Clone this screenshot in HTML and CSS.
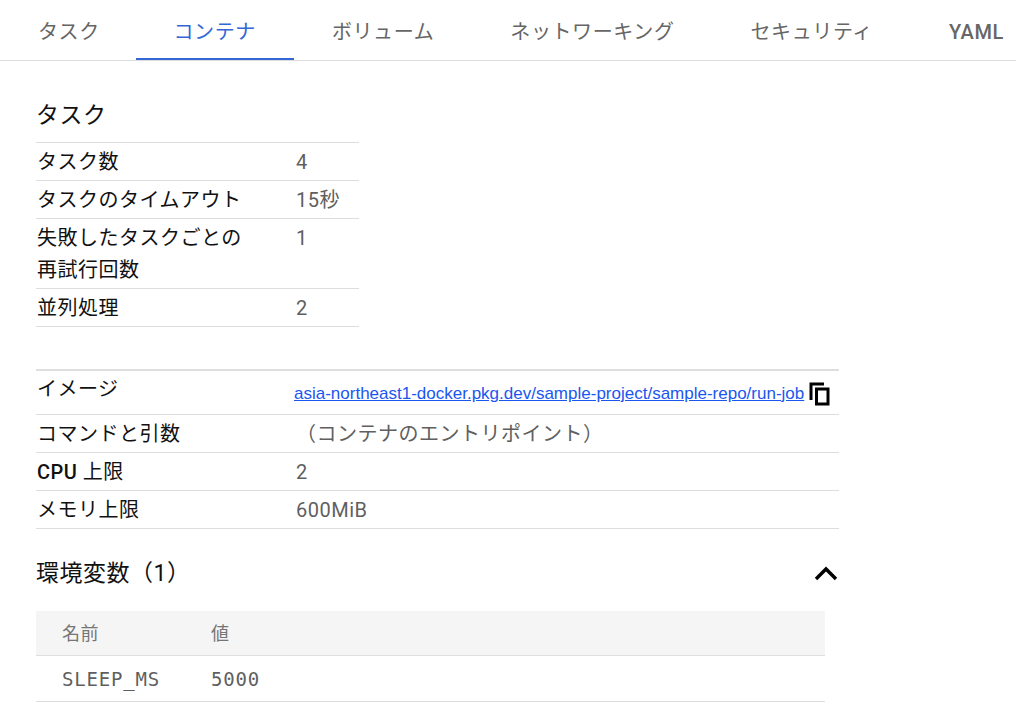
FILE: index.html
```html
<!DOCTYPE html>
<html lang="ja">

<head>
    <meta charset="UTF-8" />
    <title>コンテナ</title>
    <link rel="stylesheet" href="styles.css">
</head>

<body>
    <nav class="tabs">
        <a href="#">タスク</a>
        <a href="#" class="active">コンテナ</a>
        <a href="#">ボリューム</a>
        <a href="#">ネットワーキング</a>
        <a href="#">セキュリティ</a>
        <a href="#" class="yaml">YAML</a>
    </nav>

    <main class="content">
        <h2 class="section-title">タスク</h2>
        <div class="rows task-rows">
            <div class="row"><div class="label">タスク数</div><div class="value">4</div></div>
            <div class="row"><div class="label">タスクのタイムアウト</div><div class="value">15秒</div></div>
            <div class="row tall"><div class="label">失敗したタスクごとの<br>再試行回数</div><div class="value">1</div></div>
            <div class="row"><div class="label">並列処理</div><div class="value">2</div></div>
        </div>

        <div class="rows container-rows">
            <div class="row image-row">
                <div class="label">イメージ</div>
                <div class="value">
                    <a href="#" class="image-link">asia-northeast1-docker.pkg.dev/sample-project/sample-repo/run-job</a>
                    <svg class="copy-icon" width="22" height="24" viewBox="0 0 22 24"><path d="M2 18V2h13M7.5 7h11.5v15H7.5z" fill="none" stroke="#000" stroke-width="3"/></svg>
                </div>
            </div>
            <div class="row"><div class="label">コマンドと引数</div><div class="value">（コンテナのエントリポイント）</div></div>
            <div class="row"><div class="label"><b>CPU</b> 上限</div><div class="value">2</div></div>
            <div class="row"><div class="label">メモリ上限</div><div class="value">600MiB</div></div>
        </div>

        <div class="env-head">
            <h2 class="env-title">環境変数（1）</h2>
            <svg class="chevron" width="24" height="16" viewBox="0 0 24 16"><path d="M2 14 12 4l10 10" fill="none" stroke="#000" stroke-width="3.4"/></svg>
        </div>

        <table class="env-table">
            <thead>
                <tr><th class="name-col">名前</th><th>値</th></tr>
            </thead>
            <tbody>
                <tr><td class="name-col">SLEEP_MS</td><td>5000</td></tr>
            </tbody>
        </table>
    </main>
</body>

</html>
```

FILE: styles.css
```css
* {
    box-sizing: border-box;
}

body {
    margin: 0;
    font-family: Roboto, "Noto Sans CJK JP", sans-serif;
    background-color: #fff;
    color: #111;
    letter-spacing: 0.5px;
    overflow: hidden;
}

.tabs {
    display: flex;
    height: 61px;
    border-bottom: 1px solid #dedede;
}

.tabs a {
    display: block;
    height: 60px;
    padding: 19px 38px 0;
    font-size: 20px;
    line-height: 26px;
    letter-spacing: 0.6px;
    color: #666;
    text-decoration: none;
    white-space: nowrap;
}

.tabs a:first-child {
    padding-right: 35.7px;
}

.tabs a.active {
    color: #3367d6;
    border-bottom: 2px solid #3367d6;
}

.tabs a.yaml {
    font-weight: 500;
    padding-right: 0;
}

.content {
    padding: 0 36px;
}

.section-title {
    margin: 0;
    padding-top: 40px;
    font-size: 23px;
    line-height: 30px;
    font-weight: 400;
    height: 81px;
}

.rows {
    border-top: 1px solid #dedede;
}

.task-rows {
    width: 323px;
}

.container-rows {
    width: 803px;
    margin-top: 42px;
    border-top-width: 2px;
}

.row {
    display: flex;
    align-items: center;
    height: 38px;
    border-bottom: 1px solid #dedede;
    font-size: 20px;
}

.row.tall {
    height: 70px;
    align-items: flex-start;
    padding-top: 3px;
}

.label {
    width: 260px;
    padding-left: 1px;
    line-height: 32px;
    flex-shrink: 0;
}

.label b {
    font-weight: 500;
}

.value {
    color: #5f5f5f;
    line-height: 32px;
    display: flex;
    align-items: center;
}

.image-row {
    height: 44px;
    align-items: flex-start;
}

.image-row .label {
    padding-top: 2px;
}

.image-row .value {
    padding-top: 7px;
    margin-left: -2px;
}

.image-link {
    font-family: "Liberation Sans", sans-serif;
    font-size: 17px;
    letter-spacing: 0;
    color: #1a56f0;
}

.copy-icon {
    margin-left: 5px;
}

.env-head {
    display: flex;
    justify-content: space-between;
    align-items: center;
    width: 803px;
    height: 82px;
    padding-right: 1px;
}

.env-title {
    margin: 2px 0 0;
    font-size: 23px;
    font-weight: 400;
}

.chevron {
    margin-top: 6px;
}

.env-table {
    width: 789px;
    border-collapse: collapse;
    font-size: 18px;
    color: #757575;
}

.env-table th {
    background-color: #f5f5f5;
    height: 44px;
    font-weight: 400;
    text-align: left;
    padding: 0 0 2px 26px;
    border-bottom: 1px solid #dedede;
}

.env-table td {
    height: 46px;
    padding: 2px 0 0 26px;
    font-family: "DejaVu Sans Mono", monospace;
    font-size: 19px;
    letter-spacing: 0.8px;
    color: #5f5f5f;
    border-bottom: 1px solid #dedede;
}

.name-col {
    width: 149px;
}
```
